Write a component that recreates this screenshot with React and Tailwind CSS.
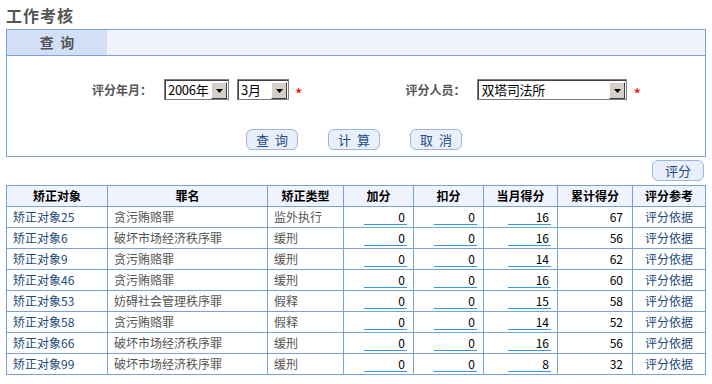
import React from 'react'

const rows = [
  { name: '矫正对象25', crime: '贪污贿赂罪', type: '监外执行', month: 16, total: 67 },
  { name: '矫正对象6', crime: '破坏市场经济秩序罪', type: '缓刑', month: 16, total: 56 },
  { name: '矫正对象9', crime: '贪污贿赂罪', type: '缓刑', month: 14, total: 62 },
  { name: '矫正对象46', crime: '贪污贿赂罪', type: '缓刑', month: 16, total: 60 },
  { name: '矫正对象53', crime: '妨碍社会管理秩序罪', type: '假释', month: 15, total: 58 },
  { name: '矫正对象58', crime: '贪污贿赂罪', type: '假释', month: 14, total: 52 },
  { name: '矫正对象66', crime: '破坏市场经济秩序罪', type: '缓刑', month: 16, total: 56 },
  { name: '矫正对象99', crime: '破坏市场经济秩序罪', type: '缓刑', month: 8, total: 32 },
]

const cols = ['w-[101px]', 'w-[160px]', 'w-[76px]', 'w-[70px]', 'w-[70px]', 'w-[74px]', 'w-[75px]', 'w-[73px]']
const heads = ['矫正对象', '罪名', '矫正类型', '加分', '扣分', '当月得分', '累计得分', '评分参考']

function Select({ value, width }) {
  return (
    <div className={`${width} h-[21px] flex border border-[#7f7f7f] bg-white`}>
      <div className="flex-1 flex min-w-0 border-t border-l border-[#404040]">
        <span className="flex-1 min-w-0 overflow-hidden whitespace-nowrap pl-[2px] text-[13px] leading-[18px] tracking-[-0.3px] text-black">{value}</span>
        <div className="shrink-0 w-[16px] h-[17px] mt-[1px] mr-[1px] bg-[#d4d0c8] border border-t-white border-l-white border-r-[#404040] border-b-[#404040] flex items-center justify-center">
          <svg width="7" height="4" viewBox="0 0 7 4"><path d="M0 0h7L3.5 4z" fill="#000" /></svg>
        </div>
      </div>
    </div>
  )
}

function Btn({ children }) {
  return (
    <button className="w-[52px] h-[21px] rounded-[6px] border border-[#9bb7e0] bg-[#e9f0fc] text-[13px] leading-[19px] text-[#1d4e89]">
      {children}
    </button>
  )
}

function NumInput({ value }) {
  return (
    <span className="inline-block w-[43px] border-b border-[#3a96e8] text-right pr-[2px] leading-[15px] text-black">{value}</span>
  )
}

export default function App() {
  return (
    <div className="w-[712px] h-[384px] bg-white px-[6px] pt-[5px] font-['Noto_Sans_CJK_SC',sans-serif] text-[12px]">
      <h1 className="h-[24px] text-[16px] font-bold leading-[20px] tracking-[1px] text-[#555]">工作考核</h1>

      {/* query panel */}
      <div className="w-[700px] border border-[#7ba2d6]">
        <div className="h-[26px] flex border-b border-[#7ba2d6] bg-[#eef3fd]">
          <div className="w-[100px] bg-[#d3dff6] text-center text-[14px] font-bold leading-[25px] text-[#555]">查&nbsp;&nbsp;询</div>
        </div>
        <div className="h-[100px] pt-[23px]">
          <div className="flex items-center h-[21px]">
            <span className="ml-[85px] w-[72px] font-bold text-[#555]">评分年月：</span>
            <Select value="2006年" width="w-[65px]" />
            <div className="w-[8px]" />
            <Select value="3月" width="w-[52px]" />
            <span className="ml-[6px] pt-[8px] text-[16px] leading-[10px] text-[#f00]">*</span>
            <span className="ml-[103px] w-[72px] font-bold text-[#555]">评分人员：</span>
            <Select value="双塔司法所" width="w-[150px]" />
            <span className="ml-[6px] pt-[8px] text-[16px] leading-[10px] text-[#f00]">*</span>
          </div>
          <div className="flex mt-[29px] ml-[239px] gap-[30px]">
            <Btn>查&nbsp;&nbsp;询</Btn>
            <Btn>计&nbsp;&nbsp;算</Btn>
            <Btn>取&nbsp;&nbsp;消</Btn>
          </div>
        </div>
      </div>

      <div className="flex justify-end pr-[2px] mt-[3px] mb-[4px]">
        <Btn>评分</Btn>
      </div>

      <table className="border-collapse border border-[#7ba2d6] text-[12px]">
        <thead>
          <tr className="h-[21px] bg-[#eef3fd]">
            {heads.map((h, i) => (
              <th key={h} className={`${cols[i]} border border-[#7ba2d6] p-0 font-bold text-black`}>{h}</th>
            ))}
          </tr>
        </thead>
        <tbody>
          {rows.map((r) => (
            <tr key={r.name} className="h-[21px]">
              <td className="border border-[#7ba2d6] pl-[6px] text-[#1a4a7a]">{r.name}</td>
              <td className="border border-[#7ba2d6] pl-[6px] text-[#555]">{r.crime}</td>
              <td className="border border-[#7ba2d6] pl-[6px] text-[#555]">{r.type}</td>
              <td className="border border-[#7ba2d6] pr-[6px] text-right"><NumInput value={0} /></td>
              <td className="border border-[#7ba2d6] pr-[6px] text-right"><NumInput value={0} /></td>
              <td className="border border-[#7ba2d6] pr-[6px] text-right"><NumInput value={r.month} /></td>
              <td className="border border-[#7ba2d6] pr-[9px] text-right text-black">{r.total}</td>
              <td className="border border-[#7ba2d6] text-center text-[#1a4a7a]">评分依据</td>
            </tr>
          ))}
        </tbody>
      </table>
    </div>
  )
}
